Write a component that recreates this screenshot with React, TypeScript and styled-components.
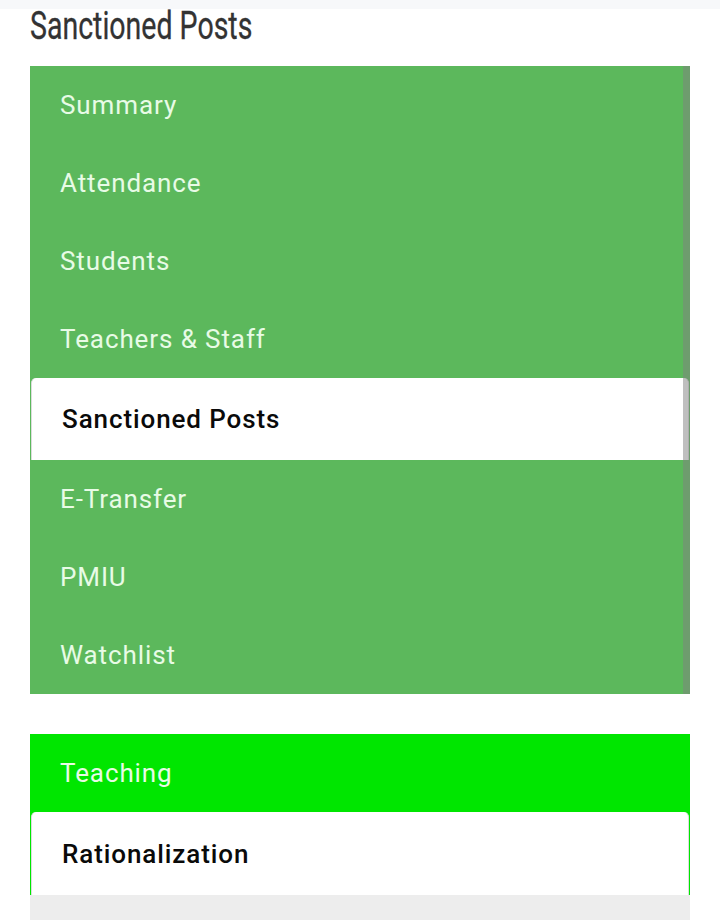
import styled, { createGlobalStyle } from "styled-components";

const GlobalStyle = createGlobalStyle`
    html, body {
        margin: 0;
        padding: 0;
        background: #ffffff;
    }
    * {
        box-sizing: border-box;
    }
`;

const Page = styled.div`
    width: 720px;
    height: 920px;
    overflow: hidden;
    background: #ffffff;
    font-family: Roboto, "Liberation Sans", sans-serif;
`;

const TopStrip = styled.div`
    height: 9px;
    background: #f7f8fa;
`;

const PageTitle = styled.h1`
    margin: 0;
    padding: 0 30px;
    height: 57px;
    font-weight: 400;
    font-size: 38px;
    line-height: 34px;
    color: #333333;
`;

// the heading is a condensed face; squeeze Roboto to get close
const TitleText = styled.span`
    display: inline-block;
    transform: scaleX(0.75);
    transform-origin: left center;
    white-space: nowrap;
    -webkit-text-stroke: 0.3px #333333;
`;

const Menu = styled.nav<{ $bg: string }>`
    position: relative;
    margin: 0 30px;
    display: flex;
    flex-direction: column;
    background: ${(p) => p.$bg};
`;

const MenuItem = styled.div<{ $active?: boolean; $height?: number }>`
    height: ${(p) => p.$height ?? 78}px;
    display: flex;
    align-items: center;
    padding-left: 30px;
    font-size: 26px;
    letter-spacing: 0.9px;
    white-space: nowrap;
    color: ${(p) => (p.$active ? "#0a0a0a" : "#e8fbe6")};
    font-weight: ${(p) => (p.$active ? 500 : 400)};
    background: ${(p) => (p.$active ? "#ffffff" : "transparent")};
    border-left: ${(p) => (p.$active ? "1px solid #dcdcdc" : "none")};
    border-right: ${(p) => (p.$active ? "1px solid #dcdcdc" : "none")};
    border-radius: ${(p) => (p.$active ? "5px 5px 0 0" : "0")};
    margin: ${(p) => (p.$active ? "0 1px" : "0")};
`;

const Scrollbar = styled.div`
    position: absolute;
    top: 0;
    right: 0;
    bottom: 0;
    width: 7px;
    background: rgba(128, 128, 128, 0.5);
`;

const Gap = styled.div`
    height: 40px;
`;

const Footer = styled.div`
    margin: 0 30px;
    height: 26px;
    background: #ededed;
`;

const mainItems = [
    "Summary",
    "Attendance",
    "Students",
    "Teachers & Staff",
    "Sanctioned Posts",
    "E-Transfer",
    "PMIU",
    "Watchlist",
];

const App = () => {
    return (
        <Page>
            <GlobalStyle />
            <TopStrip />
            <PageTitle>
                <TitleText>Sanctioned Posts</TitleText>
            </PageTitle>
            <Menu $bg="#5cb85c">
                {mainItems.map((item) => (
                    <MenuItem
                        key={item}
                        $active={item === "Sanctioned Posts"}
                        $height={item === "Sanctioned Posts" ? 82 : 78}
                    >
                        {item}
                    </MenuItem>
                ))}
                <Scrollbar />
            </Menu>
            <Gap />
            <Menu $bg="#00e600">
                <MenuItem>Teaching</MenuItem>
                <MenuItem $active $height={83}>Rationalization</MenuItem>
            </Menu>
            <Footer />
        </Page>
    );
};

export default App;
